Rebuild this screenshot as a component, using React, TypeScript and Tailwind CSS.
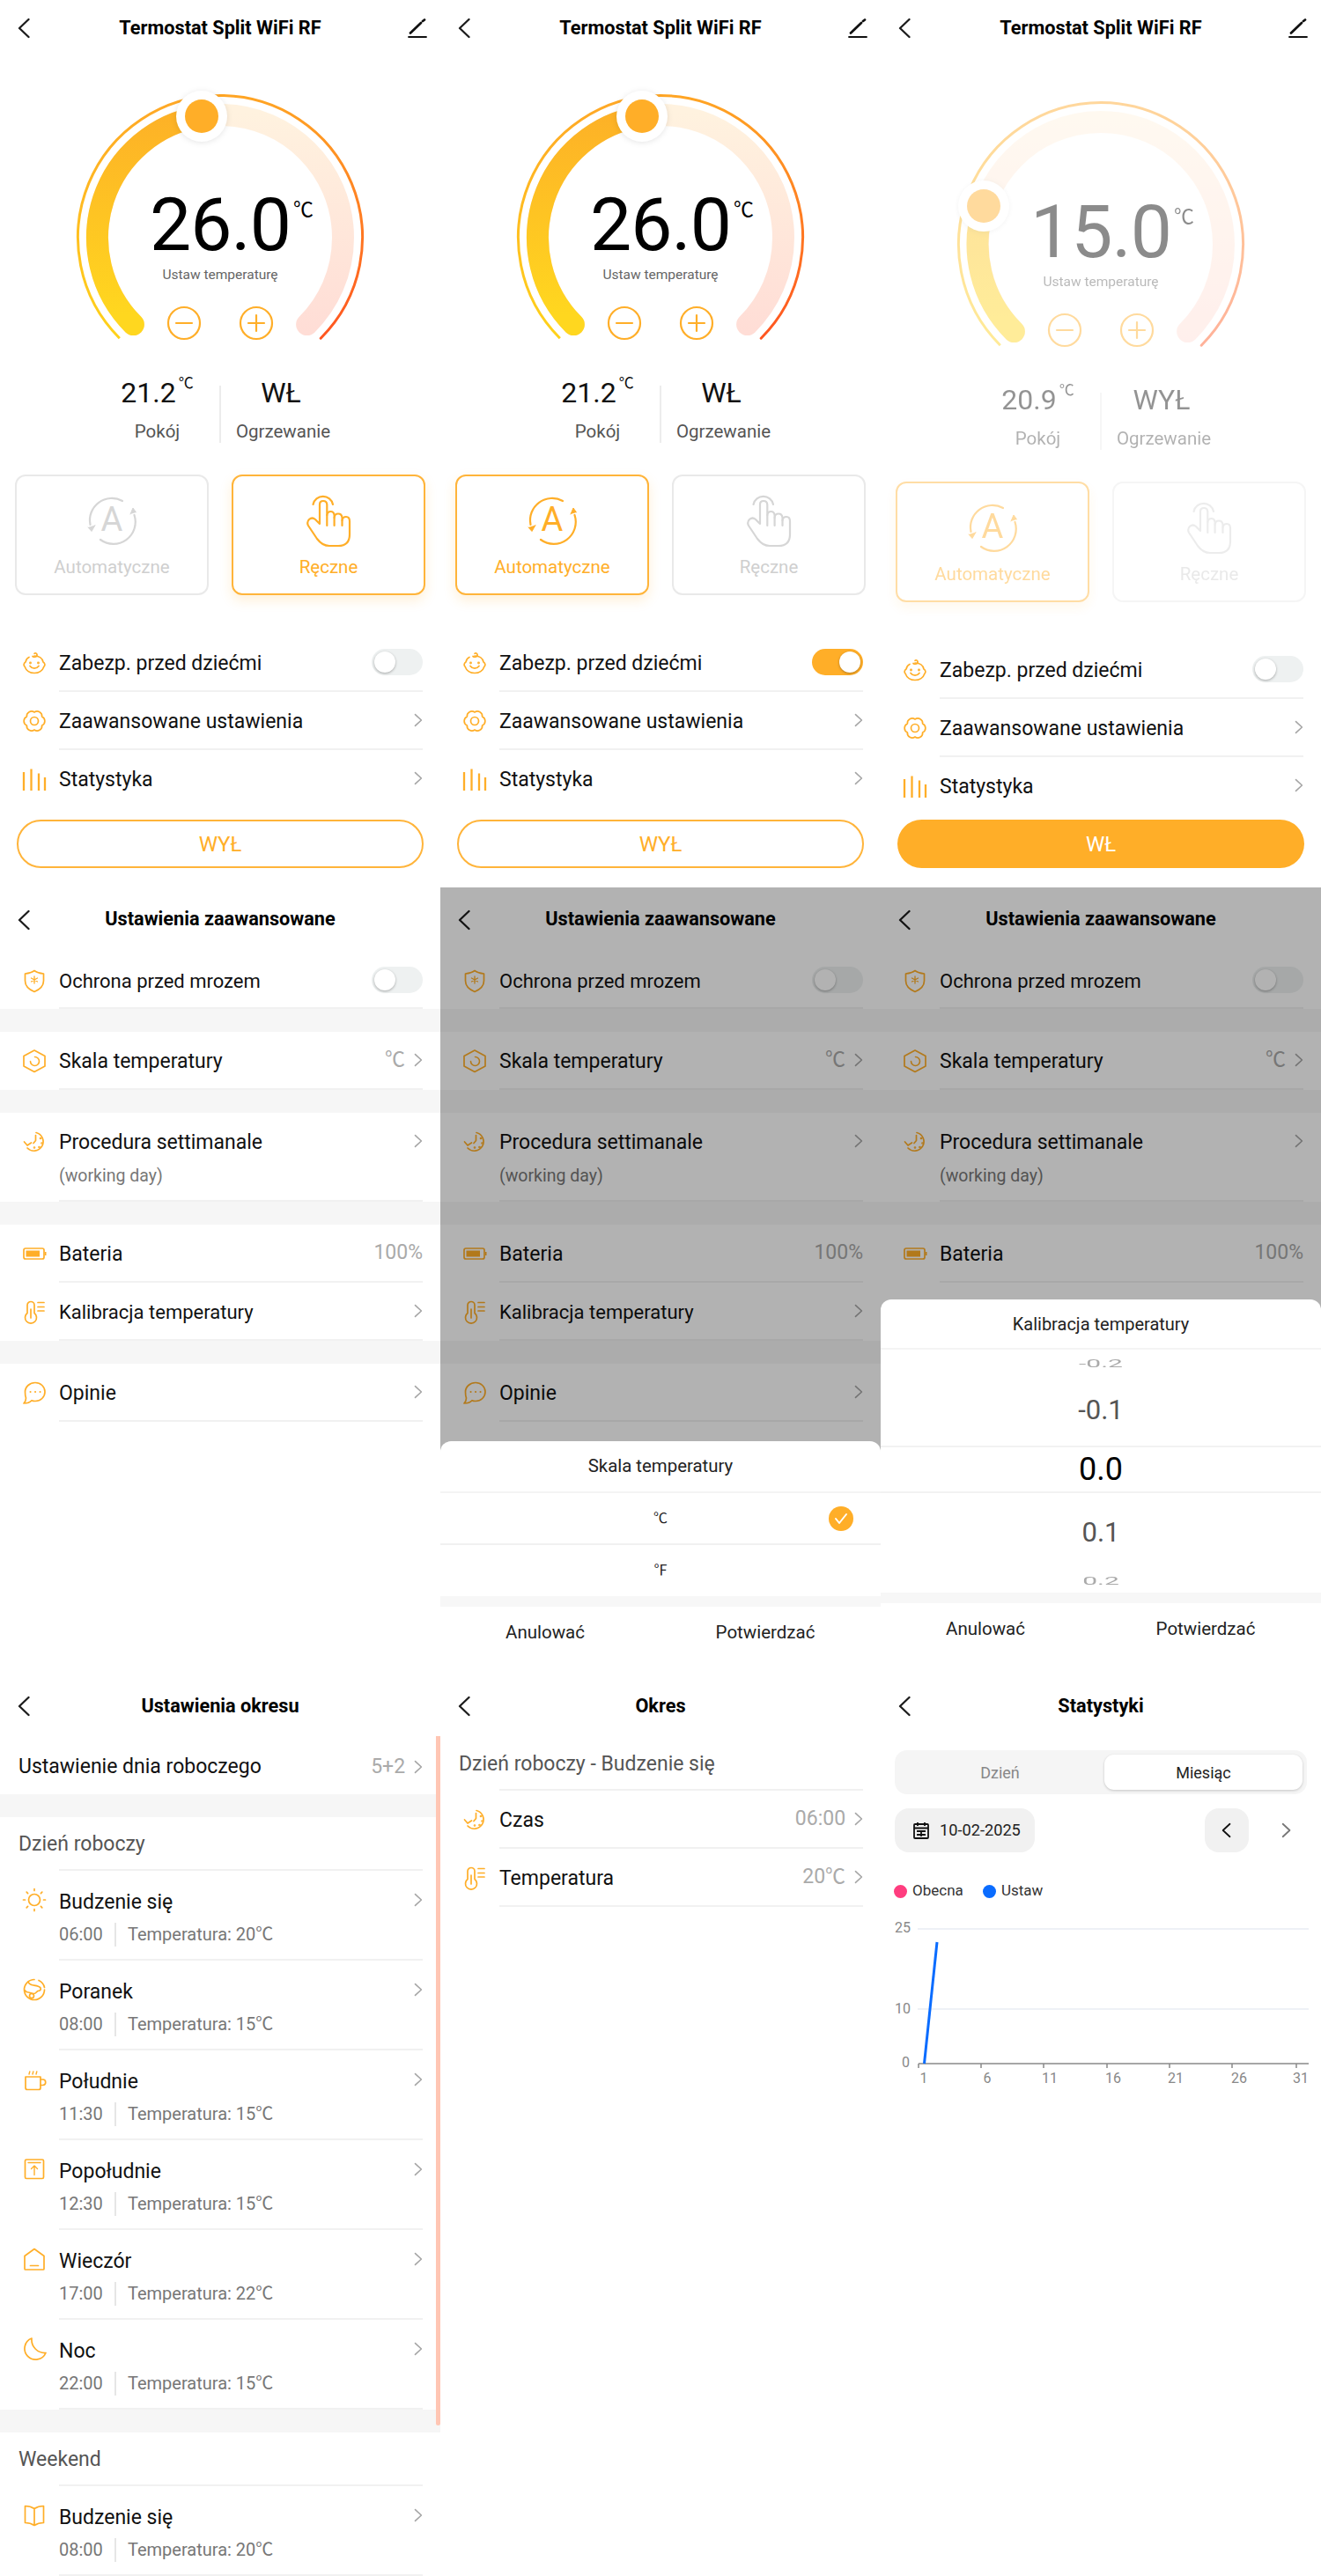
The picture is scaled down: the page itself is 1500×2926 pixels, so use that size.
import React from "react";

const ORANGE = "#FFAE28";

function I({ children, w = 28 }: { children: React.ReactNode; w?: number }) {
  return (
    <svg width={w} height={w} viewBox="0 0 28 28" fill="none" stroke={ORANGE} strokeWidth="1.7" strokeLinecap="round" strokeLinejoin="round">
      {children}
    </svg>
  );
}

const icons: Record<string, React.ReactNode> = {
  baby: (
    <I>
      <path d="M8 7.5C5.5 8.5 4.5 10.5 4 13 2 14 1.5 16.5 3 18c1.5 4.5 6 7.5 11 7.5S23.5 22.5 25 18c1.5-1.5 1-4-1-5-1-4.5-5-7-10-7" />
      <path d="M12 6.5c2 1.5 5.5.5 5-2-.3-1.5-2-2-3-1.2" />
      <path d="M9 17.5c2.5 3.5 7.5 3.5 10 0" />
      <circle cx="9.5" cy="14" r=".6" />
      <circle cx="18.5" cy="14" r=".6" />
    </I>
  ),
  gear: (
    <I>
      <path d="M22.66 9A5.5 5.5 0 0 1 22.66 19 5.5 5.5 0 0 1 14 24 5.5 5.5 0 0 1 5.34 19 5.5 5.5 0 0 1 5.34 9 5.5 5.5 0 0 1 14 4 5.5 5.5 0 0 1 22.66 9Z" />
      <circle cx="14" cy="14" r="4.5" />
    </I>
  ),
  bars: (
    <svg width="28" height="28" viewBox="0 0 28 28" fill="none" stroke={ORANGE} strokeWidth="2.3">
      <path d="M2 6V27M10.5 2.5V27M19 7.5V27M26 12V27" />
    </svg>
  ),
  shield: (
    <I>
      <path d="M14 2.5c2 1.5 6 3 10.500 3.500V14c0 6-4.500 10-10.500 12.500C8 24 3.500 20 3.500 14V6C8 5.500 12 4 14 2.500Z" />
      <path d="M14 9v8M10.500 11l7 4M17.500 11l-7 4" strokeWidth="1.300" />
    </I>
  ),
  hex: (
    <I>
      <path d="M14 2 26 8.500V20L14 26.500 2 20V8.500Z" />
      <path d="M14.500 9.500a5 5 0 1 1-5 5" strokeWidth="1.600" />
    </I>
  ),
  clock: (
    <I>
      <path d="M16 3.500A10.500 10.500 0 1 1 6 21" />
      <path d="M2.500 14l3.500 4 4.500-3" />
      <path d="M15.500 6.500v6l-2.500 3" />
      <circle cx="21" cy="10" r=".5" />
      <circle cx="22.500" cy="15.500" r=".5" />
      <circle cx="19.500" cy="20" r=".5" />
      <circle cx="14" cy="20.500" r=".5" />
    </I>
  ),
  battery: (
    <svg width="28" height="28" viewBox="0 0 28 28" fill="none">
      <rect x="2" y="8" width="23" height="12" rx="2" stroke={ORANGE} strokeWidth="1.7" />
      <rect x="4.5" y="10.5" width="15.5" height="7" fill={ORANGE} />
      <rect x="26" y="12" width="1.5" height="4" fill={ORANGE} />
    </svg>
  ),
  thermo: (
    <I>
      <path d="M6 15.5V6.5a4 4 0 0 1 8 0v9a6.5 6.5 0 1 1-8 0Z" />
      <path d="M10 11v10M18 3.5h7M18 8.5h7M18 13h7" />
    </I>
  ),
  chat: (
    <I>
      <path d="M15 2.500c6 0 11 4.500 11 10.500s-5 10.500-11 10.500c-1.500 0-3-.3-4-.8C9 25 5.500 26 2 26c1.500-1.500 2.500-3.500 2.500-6C3.500 18 3.500 15 3.500 13 3.500 7 9 2.500 15 2.500Z" />
      <path d="M9.500 13h.1M15 13h.1M20.500 13h.1" strokeWidth="2" />
    </I>
  ),
  sun: (
    <I>
      <circle cx="14" cy="14" r="6.5" />
      <path d="M14 1.500v2M14 24.500v2M1.500 14h2M24.500 14h2M5.200 5.200l1.400 1.400M21.400 21.400l1.400 1.400M5.200 22.800l1.400-1.400M21.400 6.600l1.400-1.400" />
    </I>
  ),
  globe: (
    <I>
      <path d="M14 2.500a11.500 11.500 0 1 0 11.500 11.500" />
      <path d="M7 5c1 3 3 3.500 6 4 3 .5 7 1 8 3 1 2.500-1 3.500-3 3.500-2 1-2 3-4.500 3C11 18.500 9 17 7 17c-2 0-3-1-3.500-2" />
      <path d="M19 3.500a11.500 11.500 0 0 1 6.500 8" />
      <circle cx="11" cy="21" r="2.500" />
    </I>
  ),
  cup: (
    <I>
      <path d="M4 11h17v12.500a2 2 0 0 1-2 2H6a2 2 0 0 1-2-2Z" />
      <path d="M21 14h2.500a2.500 2.500 0 0 1 0 6.500H21" />
      <path d="M8 8l.8-3M12 8l.8-3M16 8l.8-3" strokeWidth="1.4" />
    </I>
  ),
  upload: (
    <I>
      <rect x="3.5" y="3" width="21" height="21.5" rx="1.5" />
      <path d="M7 6.500h14M14 20.500V10M10.500 13.500 14 10l3.500 3.500" strokeWidth="1.4" />
    </I>
  ),
  house: (
    <I>
      <path d="M3 10.500 14 2.500l11 8V25a1 1 0 0 1-1 1H4a1 1 0 0 1-1-1Z" />
      <path d="M9.500 21.500h9" />
    </I>
  ),
  moon: (
    <I>
      <path d="M11 2A12.500 12.500 0 1 0 27 18.500 15 15 0 0 1 11 2Z" />
    </I>
  ),
  book: (
    <I>
      <path d="M14 6.500C11 4.500 7.500 3.500 3.500 3.500V22.500C7.500 22.500 11 23.500 14 25.500 17 23.500 20.500 22.500 24.500 22.500V3.500C20.500 3.500 17 4.500 14 6.500ZM14 6.500V25.500" />
    </I>
  ),
};

function Chevron({ color = "#a5a5a5", size = 16 }: { color?: string; size?: number }) {
  return (
    <svg width={size * 0.62} height={size} viewBox="0 0 10 16" fill="none" stroke={color} strokeWidth="1.6" strokeLinecap="round" strokeLinejoin="round" className="shrink-0">
      <path d="M1.5 1.5 8.5 8l-7 6.5" />
    </svg>
  );
}

function Back() {
  return (
    <svg width="14" height="24" viewBox="0 0 14 24" fill="none" stroke="#1c1c1c" strokeWidth="2.3" strokeLinecap="round" strokeLinejoin="round">
      <path d="M12.5 2 2 12l10.5 10" />
    </svg>
  );
}

function Header({ title, edit, h = "h-[64px]" }: { title: string; edit?: boolean; h?: string }) {
  return (
    <div className={`flex items-center justify-between pl-[20px] pr-[15px] shrink-0 relative ${h}`}>
      <Back />
      <div className="absolute left-0 right-0 text-center text-[21.7px] font-bold text-black">{title}</div>
      {edit && (
        <svg width="22" height="22" viewBox="0 0 22 22" fill="none" stroke="#111" strokeLinecap="round">
          <path d="M3 16.5 15 5" strokeWidth="2.8" />
          <path d="M17 3l2-1.5" strokeWidth="2.8" />
          <path d="M1 21h20" strokeWidth="1.8" />
        </svg>
      )}
    </div>
  );
}

function Toggle({ on }: { on?: boolean }) {
  return (
    <div className={`w-[58px] h-[30px] rounded-full p-[3px] flex ${on ? "bg-[#FFAE28] justify-end" : "bg-[#eef1f1] justify-start"}`}>
      <div className="w-[24px] h-[24px] rounded-full bg-white shadow-[0_1px_3px_rgba(0,0,0,0.3)]" />
    </div>
  );
}

function Row({ icon, label, value, sub, toggle, last, chevron = true, h = "h-[66px]", text = "text-[23px]" }: {
  icon?: string; label: string; value?: string; sub?: string; toggle?: "on" | "off"; last?: boolean; chevron?: boolean; h?: string; text?: string;
}) {
  return (
    <div className={`flex bg-white ${h}`}>
      <div className="w-[67px] pl-[10px] flex justify-center items-start pt-[19px] shrink-0">{icon && icons[icon]}</div>
      <div className={`flex-1 mr-[20px] flex items-start justify-between border-b-2 ${last ? "border-transparent" : "border-[#f1f1f1]"}`}>
        <div className="pt-[19px]">
          <div className={`${text} leading-[30px] text-[#111]`}>{label}</div>
          {sub && <div className="text-[19.5px] leading-[26px] mt-[10px] text-[#777]">{sub}</div>}
        </div>
        <div className="flex items-center gap-[10px] h-[64px]">
          {value && <span className="text-[23px] text-[#aaa]">{value}</span>}
          {toggle ? <Toggle on={toggle === "on"} /> : chevron && <Chevron />}
        </div>
      </div>
    </div>
  );
}

function Band() {
  return <div className="h-[26px] bg-[#f6f6f6]" />;
}

function AutoIcon({ color }: { color: string }) {
  return (
    <svg width="56" height="56" viewBox="0 0 56 56" fill="none" stroke={color} strokeWidth="2.2" strokeLinecap="round">
      <path d="M3.5 33A25 25 0 0 1 40 6" />
      <path d="M53.5 22A25 25 0 0 1 15 50" />
      <path d="M1 36l4 4.5 4-7" fill={color} strokeWidth="1" />
      <path d="M49 21l3-7 3.5 5" fill={color} strokeWidth="1" />
      <text x="28" y="40" textAnchor="middle" fontSize="38" fill={color} stroke="none" fontFamily="Roboto">A</text>
    </svg>
  );
}

function HandIcon({ color }: { color: string }) {
  return (
    <svg width="52" height="62" viewBox="-1 -1 52 62" fill="none" stroke={color} strokeWidth="2.2" strokeLinecap="round" strokeLinejoin="round">
      <path d="M7.5 12A11.5 11.5 0 0 1 30 12" />
      <path d="M15 34 10 29Q6.5 26 3 29 0 32 2 36L12 51Q18 59 26 59H36Q49 59 49 46V31Q49 26 45 26 41 26 40.5 30V27Q40 22.5 36 22.5 32 22.5 31.6 27V24Q31 20 27.5 20 24 20 23.3 24V12Q23 8 19 8 15 8 15 12Z" />
      <path d="M23.3 24V36M31.6 27V36M40.5 30V36" />
    </svg>
  );
}

function ModeCard({ kind, active }: { kind: "auto" | "hand"; active?: boolean }) {
  const color = active ? ORANGE : "#d6d6d6";
  return (
    <div className={`w-[220px] h-[137px] rounded-[12px] border-2 flex flex-col items-center ${active ? "border-[#FFB43A] shadow-[0_6px_14px_rgba(255,174,40,0.18)]" : "border-[#e9e9e9]"}`}>
      <div className="h-[70px] mt-[15px] flex items-center justify-center">
        {kind === "auto" ? <AutoIcon color={color} /> : <HandIcon color={color} />}
      </div>
      <div className={`text-[20.5px] leading-[26px] mt-[5px] ${active ? "text-[#FFAE28]" : "text-[#cfcfcf]"}`}>
        {kind === "auto" ? "Automatyczne" : "Ręczne"}
      </div>
    </div>
  );
}

function Gauge({ value, knob }: { value: string; knob: [number, number] }) {
  const id = value.replace(".", "");
  return (
    <div className="relative w-[500px] h-[310px]">
      <svg width="500" height="310" viewBox="0 0 500 310" fill="none">
        <defs>
          <linearGradient id={`la${id}`} gradientUnits="userSpaceOnUse" x1="0" y1="40" x2="0" y2="270">
            <stop offset="0" stopColor="#FDB127" />
            <stop offset="1" stopColor="#FFD71F" />
          </linearGradient>
          <linearGradient id={`ra${id}`} gradientUnits="userSpaceOnUse" x1="0" y1="40" x2="0" y2="290">
            <stop offset="0" stopColor="#FFF2DF" />
            <stop offset="1" stopColor="#FFDDD6" />
          </linearGradient>
          <linearGradient id={`lo${id}`} gradientUnits="userSpaceOnUse" x1="0" y1="20" x2="0" y2="296">
            <stop offset="0" stopColor="#FFA726" />
            <stop offset="1" stopColor="#FFD21A" />
          </linearGradient>
          <linearGradient id={`ro${id}`} gradientUnits="userSpaceOnUse" x1="0" y1="20" x2="0" y2="296">
            <stop offset="0" stopColor="#FFA524" />
            <stop offset="1" stopColor="#FF5520" />
          </linearGradient>
        </defs>
        <path d="M135.8 296.2A161.5 161.5 0 0 1 250 20.5" stroke={`url(#lo${id})`} strokeWidth="3" />
        <path d="M250 20.5A161.5 161.5 0 0 1 364.2 296.2" stroke={`url(#ro${id})`} strokeWidth="3" strokeLinecap="round" />
        <path d="M151.4 280.6A139.5 139.5 0 1 1 348.6 280.6" stroke={`url(#ra${id})`} strokeWidth="25" strokeLinecap="round" />
        <path d={`M151.4 280.6A139.5 139.5 0 0 1 ${knob[0]} ${knob[1]}`} stroke={`url(#la${id})`} strokeWidth="25" strokeLinecap="round" />
        <circle cx={knob[0]} cy={knob[1]} r="29" fill="#fff" className="drop-shadow-[0_1px_3px_rgba(0,0,0,0.1)]" />
        <circle cx={knob[0]} cy={knob[1]} r="19" fill={ORANGE} />
        <g stroke={ORANGE} strokeWidth="2.2" strokeLinecap="round">
          <circle cx="209" cy="279" r="18" />
          <path d="M200 279h18" />
          <circle cx="291" cy="279" r="18" />
          <path d="M282 279h18M291 270v18" />
        </g>
      </svg>
      <div className="absolute top-[126px] left-0 right-0 flex justify-center">
        <div className="relative text-[84px] leading-[84px] text-black tracking-[-1px]">
          {value}
          <span className="absolute left-full top-[12px] ml-[3px] text-[23px] leading-[26px] tracking-normal">℃</span>
        </div>
      </div>
      <div className="absolute top-[214px] left-0 right-0 text-center text-[15.5px] leading-[20px] text-[#666]">Ustaw temperaturę</div>
    </div>
  );
}

function Thermostat({ mode, value, knob, room, heat, lock, power, dim }: {
  mode: "auto" | "hand"; value: string; knob: [number, number]; room: string; heat: string; lock?: boolean; power: "outline" | "fill"; dim?: boolean;
}) {
  return (
    <div className="h-[1008px] flex flex-col">
      <Header title="Termostat Split WiFi RF" edit />
      <div className={dim ? "opacity-45 mt-[32px]" : "mt-[24px]"}>
        <Gauge value={value} knob={knob} />
        <div className="flex justify-center h-[80px] mt-[30px]">
          <div className="w-[141px] flex flex-col items-center">
            <div className="flex items-start text-[32px] leading-[36px] text-[#111]">
              {room}
              <span className="mt-[-3px] ml-[3px] text-[17px] leading-[20px]">℃</span>
            </div>
            <div className="text-[20.5px] leading-[24px] mt-[14px] text-[#555]">Pokój</div>
          </div>
          <div className="w-[2px] h-[65px] mt-[10px] bg-[#ececec]" />
          <div className="w-[141px] flex flex-col items-center">
            <div className="text-[32px] leading-[36px] text-[#111] pr-[5px]">{heat}</div>
            <div className="text-[20.5px] leading-[24px] mt-[14px] text-[#555]">Ogrzewanie</div>
          </div>
        </div>
        <div className="flex justify-between px-[17px] mt-[31px]">
          <ModeCard kind="auto" active={mode === "auto"} />
          <ModeCard kind="hand" active={mode === "hand"} />
        </div>
      </div>
      <div className="mt-[44px]">
        <Row icon="baby" label="Zabezp. przed dziećmi" toggle={lock ? "on" : "off"} />
        <Row icon="gear" label="Zaawansowane ustawienia" />
        <Row icon="bars" label="Statystyka" last />
      </div>
      <div className={`mx-[19px] h-[55px] rounded-full flex items-center justify-center text-[24px] ${dim ? "mt-[5px]" : "mt-[13px]"} ${power === "fill" ? "bg-[#FFAE28] text-white" : "border-2 border-[#FFB43A] text-[#FFAE28]"}`}>
        {power === "fill" ? "WŁ" : "WYŁ"}
      </div>
    </div>
  );
}

function SheetActions() {
  return (
    <>
      <div className="h-[12px] bg-[#f7f7f7]" />
      <div className="grid grid-cols-2 h-[58px] items-center text-center text-[20.5px] text-[#222]">
        <div className="-translate-x-[6px]">Anulować</div>
        <div className="-translate-x-[6px]">Potwierdzać</div>
      </div>
    </>
  );
}

function Sheet({ h, children }: { h: string; children: React.ReactNode }) {
  return <div className={`absolute left-0 right-0 bottom-0 bg-white rounded-t-[12px] ${h}`}>{children}</div>;
}

function Advanced({ overlay }: { overlay?: "scale" | "calib" }) {
  return (
    <div className="h-[912px] relative">
      <Header title="Ustawienia zaawansowane" h="h-[73px]" />
      <Row icon="shield" label="Ochrona przed mrozem" toggle="off" h="h-[65px]" text="text-[22px]" />
      <Band />
      <Row icon="hex" label="Skala temperatury" value="℃" />
      <Band />
      <Row icon="clock" label="Procedura settimanale" sub="(working day)" h="h-[101px]" />
      <Band />
      <Row icon="battery" label="Bateria" value="100%" chevron={false} />
      {overlay !== "calib" && (
        <>
          <Row icon="thermo" label="Kalibracja temperatury" text="text-[22px]" />
          <Band />
          <Row icon="chat" label="Opinie" />
        </>
      )}
      {overlay && <div className="absolute inset-0 bg-black/30" />}
      {overlay === "scale" && (
        <Sheet h="h-[283px]">
          <div className="h-[59px] flex items-center justify-center text-[20.4px] text-[#222] border-b-2 border-[#f4f4f4]">Skala temperatury</div>
          <div className="h-[59px] flex items-center justify-center relative text-[16px] text-[#222] border-b-2 border-[#f1f1f1]">
            ℃
            <div className="absolute right-[31px] w-[28px] h-[28px] rounded-full bg-[#FFAE28] flex items-center justify-center">
              <svg width="16" height="14" viewBox="0 0 16 14" fill="none" stroke="#fff" strokeWidth="2" strokeLinecap="round" strokeLinejoin="round">
                <path d="M2 7l4 5 8-10" />
              </svg>
            </div>
          </div>
          <div className="h-[58px] flex items-center justify-center text-[16px] text-[#222]">℉</div>
          <SheetActions />
        </Sheet>
      )}
      {overlay === "calib" && (
        <Sheet h="h-[444px]">
          <div className="h-[57px] flex items-center justify-center text-[20px] text-[#222] border-b-2 border-[#f4f4f4]">Kalibracja temperatury</div>
          <div className="h-[30px] flex items-center justify-center text-[30px] text-[#aaa] scale-y-[.42]">-0.2</div>
          <div className="h-[79px] flex items-center justify-center text-[31px] text-[#555]">-0.1</div>
          <div className="h-[54px] flex items-center justify-center text-[36px] text-black border-y-2 border-[#f2f2f2]">0.0</div>
          <div className="h-[90px] flex items-center justify-center text-[31px] text-[#555]">0.1</div>
          <div className="h-[27px] -mt-[4px] flex items-center justify-center text-[30px] text-[#aaa] scale-y-[.42]">0.2</div>
          <SheetActions />
        </Sheet>
      )}
    </div>
  );
}

function Period({ icon, name, time, temp }: { icon: string; name: string; time: string; temp: string }) {
  return (
    <div className="flex h-[102px]">
      <div className="w-[67px] pl-[10px] flex justify-center items-start pt-[19px] shrink-0">{icons[icon]}</div>
      <div className="flex-1 mr-[20px] flex justify-between border-b-2 border-[#f1f1f1]">
        <div className="pt-[21px]">
          <div className="text-[23px] leading-[30px] text-[#111]">{name}</div>
          <div className="flex items-center h-[28px] mt-[7px] text-[20px] text-[#777]">
            <span className="w-[63px]">{time}</span>
            <span className="w-[2px] h-[27px] bg-[#e6e6e6] mr-[13px]" />
            <span>Temperatura: {temp}℃</span>
          </div>
        </div>
        <div className="pt-[25px]"><Chevron /></div>
      </div>
    </div>
  );
}

function SectionTitle({ children, h = "h-[61px]" }: { children: React.ReactNode; h?: string }) {
  return (
    <div className={`pl-[21px] pr-[20px] ${h}`}>
      <div className="h-full flex items-center text-[23px] text-[#555] pt-[2px] relative">
        {children}
        <div className="absolute left-[46px] right-0 bottom-0 h-[2px] bg-[#f1f1f1]" />
      </div>
    </div>
  );
}

function PeriodSettings() {
  return (
    <div className="h-[1006px] relative overflow-hidden">
      <Header title="Ustawienia okresu" h="h-[36px]" />
      <div className="mt-[16px] h-[66px] flex items-center justify-between pl-[21px] pr-[20px] pt-[4px]">
        <span className="text-[23px] text-[#111]">Ustawienie dnia roboczego</span>
        <span className="flex items-center gap-[10px] text-[23px] text-[#aaa]">5+2 <Chevron /></span>
      </div>
      <Band />
      <SectionTitle>Dzień roboczy</SectionTitle>
      <Period icon="sun" name="Budzenie się" time="06:00" temp="20" />
      <Period icon="globe" name="Poranek" time="08:00" temp="15" />
      <Period icon="cup" name="Południe" time="11:30" temp="15" />
      <Period icon="upload" name="Popołudnie" time="12:30" temp="15" />
      <Period icon="house" name="Wieczór" time="17:00" temp="22" />
      <Period icon="moon" name="Noc" time="22:00" temp="15" />
      <Band />
      <SectionTitle>Weekend</SectionTitle>
      <Period icon="book" name="Budzenie się" time="08:00" temp="20" />
      <div className="absolute right-0 top-[52px] w-[5px] h-[783px] bg-[#FFC6B4] rounded-b-[3px]" />
    </div>
  );
}

function PeriodDetail() {
  return (
    <div className="h-[1006px]">
      <Header title="Okres" h="h-[36px]" />
      <div className="mt-[16px]">
        <SectionTitle h="h-[62px]">Dzień roboczy - Budzenie się</SectionTitle>
      </div>
      <Row icon="clock" label="Czas" value="06:00" />
      <Row icon="thermo" label="Temperatura" value="20℃" />
    </div>
  );
}

function Stats() {
  const xs = [1043, 1114, 1185, 1257, 1328, 1399, 1472];
  const labels = ["1", "6", "11", "16", "21", "26", "31"];
  const lx = [49, 121, 192, 264, 335, 407, 477];
  return (
    <div className="h-[1006px]">
      <Header title="Statystyki" h="h-[36px]" />
      <div className="mt-[32px] mx-[16px] h-[50px] rounded-[14px] bg-[#f5f5f5] flex p-[5px] text-[18px]">
        <div className="flex-1 flex items-center justify-center text-[#888] pr-[4px]">Dzień</div>
        <div className="w-[225px] rounded-[11px] bg-white shadow-[0_1px_3px_rgba(0,0,0,0.2)] flex items-center justify-center text-[#222]">Miesiąc</div>
      </div>
      <div className="mt-[16px] mx-[16px] h-[50px] flex items-center">
        <div className="w-[159px] h-[50px] rounded-[16px] bg-[#f1f1f1] flex items-center pl-[21px] gap-[12px] text-[18.2px] text-[#222]">
          <svg width="18" height="20" viewBox="0 0 18 20" fill="none" stroke="#111" strokeWidth="1.8">
            <rect x="1" y="3" width="16" height="16" rx="1" />
            <path d="M1 7.5h16M5 1v4M13 1v4M4 11h10M4 15h10M9 10v7" />
          </svg>
          10-02-2025
        </div>
        <div className="ml-auto w-[50px] h-[50px] rounded-[16px] bg-[#f1f1f1] flex items-center justify-center">
          <div className="rotate-180"><Chevron color="#111" size={18} /></div>
        </div>
        <div className="w-[66px] flex justify-end pr-[18px]"><Chevron color="#777" size={18} /></div>
      </div>
      <div className="mt-[32px] mx-[15px] h-[24px] flex items-center text-[17px] text-[#333]">
        <span className="w-[15px] h-[15px] rounded-full bg-[#FF3D7F] mr-[6px]" />
        <span className="w-[80px]">Obecna</span>
        <span className="w-[15px] h-[15px] rounded-full bg-[#0A6CFF] mr-[6px]" />
        <span>Ustaw</span>
      </div>
      <svg width="500" height="210" viewBox="0 0 500 210" className="mt-[10px] block" fontFamily="Roboto" fontSize="16" fill="#888">
        <path d="M42 21H486M42 112H486" stroke="#e9edf3" strokeWidth="1.5" />
        <text x="16" y="25">25</text>
        <text x="16" y="117">10</text>
        <text x="24" y="178">0</text>
        <path d="M43 174H486" stroke="#888" strokeWidth="1.5" />
        {xs.map((x) => (
          <path key={x} d={`M${x - 1000} 174v5`} stroke="#888" strokeWidth="1.5" />
        ))}
        {labels.map((l, i) => (
          <text key={l} x={lx[i]} y="196" textAnchor="middle">{l}</text>
        ))}
        <path d="M49.5 174 64 36" stroke="#0A6CFF" strokeWidth="3" />
      </svg>
    </div>
  );
}

export default function App() {
  return (
    <div className="w-[1500px] h-[2926px] grid grid-cols-[500px_500px_500px] bg-white overflow-hidden font-[Roboto,'Noto_Sans_CJK_SC',sans-serif]">
      <Thermostat mode="hand" value="26.0" knob={[229, 44]} room="21.2" heat="WŁ" power="outline" />
      <Thermostat mode="auto" value="26.0" knob={[229, 44]} room="21.2" heat="WŁ" lock power="outline" />
      <Thermostat mode="auto" value="15.0" knob={[117, 138]} room="20.9" heat="WYŁ" power="fill" dim />
      <Advanced />
      <Advanced overlay="scale" />
      <Advanced overlay="calib" />
      <PeriodSettings />
      <PeriodDetail />
      <Stats />
    </div>
  );
}
